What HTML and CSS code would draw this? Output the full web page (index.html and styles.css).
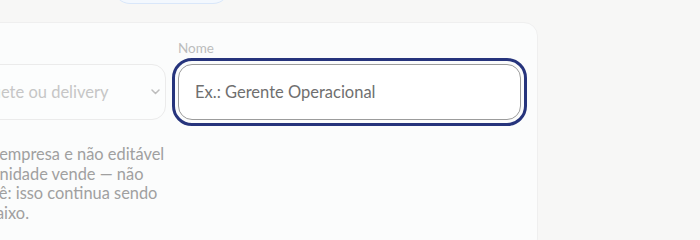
FILE: index.html
```html
<!DOCTYPE HTML>
<html lang="pt-BR">
  <head>
    <meta charset="utf-8">
    <title>Cargo</title>
    <link rel="stylesheet" href="styles.css">
  </head>
  <body>
    <div class="page">
      <div class="tabs">
        <span class="tab">Dados</span>
        <span class="tab tab-active">Permissões</span>
      </div>

      <div class="card">
        <div class="grid">
          <div class="field">
            <label class="label">Modalidade</label>
            <div class="select-box">
              <span class="select-text">Selecione: café, banquete ou delivery</span>
              <svg class="chevron" width="9" height="6" viewBox="0 0 9 6"><path d="M1 1l3.5 3.5L8 1" fill="none" stroke="#bdbdbd" stroke-width="1.5" stroke-linecap="round" stroke-linejoin="round"/></svg>
            </div>
            <p class="help">
              <span>Herdado do cadastro da empresa e não editável</span>
              <span>aqui. Ela indica o que a unidade vende — não</span>
              <span>o que cada funcionário vê: isso continua sendo</span>
              <span>definido na tela, mais abaixo.</span>
            </p>
          </div>
          <div class="field">
            <label class="label" for="nome">Nome</label>
            <input id="nome" class="input" type="text" placeholder="Ex.: Gerente Operacional">
          </div>
        </div>
      </div>
    </div>
  </body>
</html>
```

FILE: styles.css
```css
body{margin:0; background-color:#f7f7f6; font-family:"Lato","Noto Sans",sans-serif; overflow:hidden;}
.page{
	margin-left:-194px;
	margin-top:-30px;
	width:732px;
}
.tabs{
	display:flex;
	gap:12px;
	padding-left:178px;
	height:34px;
}
.tab{
	display:inline-block;
	width:117px;
	height:34px;
	box-sizing:border-box;
	border-radius:17px;
	color:#9aa;
	font-size:14px;
}
.tab-active{
	background-color:#f3f8fe;
	border:1px solid #d9e7fa;
	color:#3b5ba8;
}
.card{
	margin-top:18px;
	background-color:#fbfcfc;
	border:1px solid #efefef;
	border-radius:14px;
	padding:17px 16px 30px;
}
.grid{
	display:grid;
	grid-template-columns:343px 343px;
	gap:12px;
}
.field{display:flex; flex-direction:column;}
.label{
	font-size:13.5px;
	line-height:16px;
	color:#bcbcbc;
	margin-bottom:8px;
}
.select-box{
	height:56px;
	box-sizing:border-box;
	border:1px solid #ebebeb;
	border-radius:14px;
	background-color:#fcfdfd;
	display:flex;
	align-items:center;
	padding:0 5px 0 16px;
	gap:8px;
}
.select-text{
	flex:1;
	font-size:16.5px;
	color:#c6c6c6;
	white-space:nowrap;
	overflow:hidden;
}
.chevron{flex:none;}
.help{
	margin:24px 0 0;
	font-size:16.4px;
	line-height:19.6px;
	color:#a0a0a0;
}
.help span{display:block; white-space:nowrap;}
.input{
	height:56px;
	box-sizing:border-box;
	border:1px solid #9c9c9c;
	border-radius:14px;
	background-color:#fff;
	padding:0 16px;
	font-family:inherit;
	font-size:16.5px;
	color:#555;
	outline:3px solid #26347c;
	outline-offset:3px;
}
.input::placeholder{color:#6f6f6f;}
```
